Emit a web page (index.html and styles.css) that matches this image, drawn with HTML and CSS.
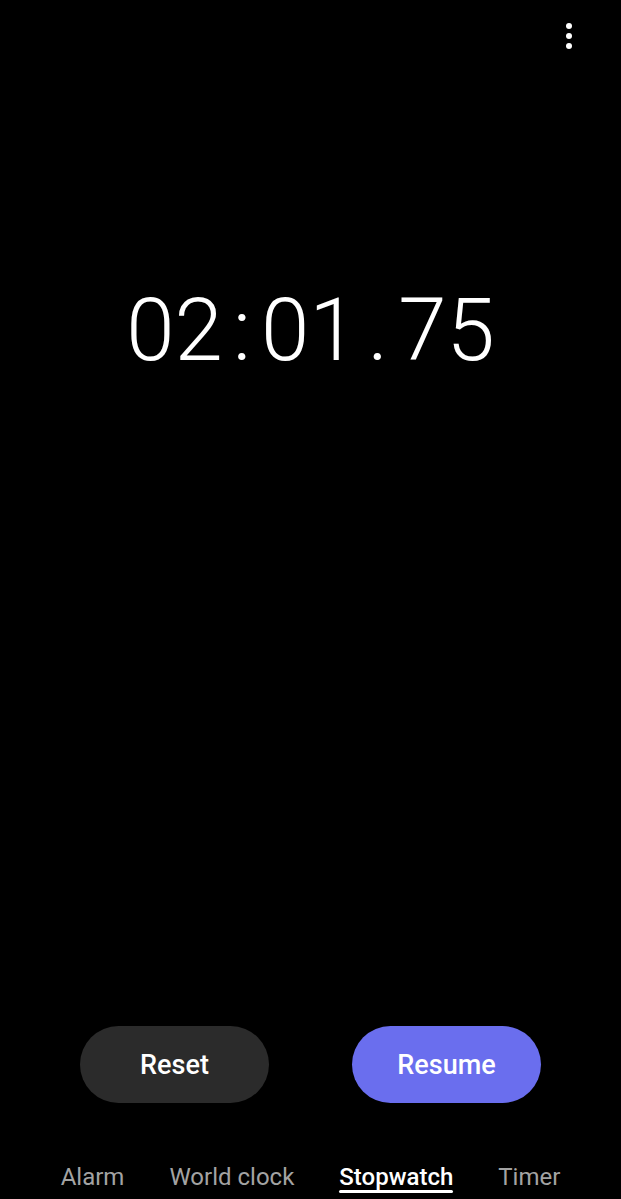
FILE: index.html
```html
<!DOCTYPE html>
<html lang="en">
<head>
    <meta charset="UTF-8">
    <meta name="viewport" content="width=device-width, initial-scale=1.0">
    <title>Stopwatch</title>
    <link rel="stylesheet" href="styles.css">
</head>
<body>
    <div class="app">
        <div class="topbar">
            <button class="menu-btn" aria-label="More options">
                <svg width="8" height="28" viewBox="0 0 8 28">
                    <circle cx="4" cy="4" r="3" fill="#fff"/>
                    <circle cx="4" cy="14" r="3" fill="#fff"/>
                    <circle cx="4" cy="24" r="3" fill="#fff"/>
                </svg>
            </button>
        </div>

        <div class="time">
            <span class="digits">02</span><span class="sep">:</span><span class="digits">01</span><span class="sep">.</span><span class="digits">75</span>
        </div>

        <div class="spacer"></div>

        <div class="controls">
            <button class="pill reset">Reset</button>
            <button class="pill resume">Resume</button>
        </div>

        <nav class="tabs">
            <span class="tab">Alarm</span>
            <span class="tab">World clock</span>
            <span class="tab active">Stopwatch</span>
            <span class="tab">Timer</span>
        </nav>
    </div>
</body>
</html>
```

FILE: styles.css
```css
html, body {
    margin: 0;
    padding: 0;
    background-color: #000;
    color: #fff;
    font-family: Roboto, 'Noto Sans', sans-serif;
}
.app {
    height: 100vh;
    display: flex;
    flex-direction: column;
}
.topbar {
    height: 72px;
    display: flex;
    justify-content: flex-end;
    align-items: flex-start;
}
.menu-btn {
    background: none;
    border: none;
    padding: 0;
    margin: 22px 48px 0 0;
    width: 8px;
    height: 28px;
    cursor: pointer;
}
.menu-btn svg {
    display: block;
}
.time {
    margin-top: 215px;
    display: flex;
    justify-content: center;
    font-size: 87px;
    font-weight: 300;
    line-height: 87px;
}
.sep {
    margin: 0 10px;
}
.spacer {
    flex: 1;
}
.controls {
    display: flex;
    justify-content: center;
    gap: 83px;
}
.pill {
    width: 189px;
    height: 77px;
    border: none;
    border-radius: 39px;
    font-family: Roboto, 'Noto Sans', sans-serif;
    font-size: 27px;
    font-weight: 500;
    color: #fff;
    cursor: pointer;
}
.reset {
    background-color: #2b2b2b;
}
.resume {
    background-color: #6a6eee;
}
.tabs {
    margin-top: 60px;
    padding-bottom: 6px;
    display: flex;
    justify-content: center;
    gap: 45px;
    font-size: 24px;
    line-height: 28px;
}
.tab {
    display: flex;
    flex-direction: column;
    color: #a3a3a3;
}
.tab.active {
    color: #fff;
    font-weight: 500;
}
.tab.active::after {
    content: '';
    display: block;
    height: 3px;
    margin-top: -1px;
    border-radius: 2px;
    background-color: #fff;
}
```
